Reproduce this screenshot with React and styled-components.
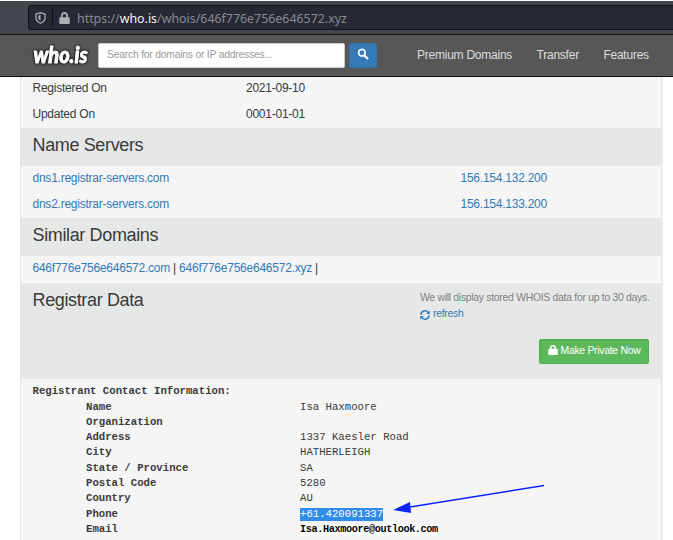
import React from 'react';
import styled, { createGlobalStyle } from 'styled-components';
import { FaLock } from 'react-icons/fa';

const Global = createGlobalStyle`
  * { box-sizing: border-box; }
  html, body { margin: 0; background: #fff; overflow: hidden; }
  body { font-family: "Liberation Sans", Arial, sans-serif; font-size: 12px; letter-spacing: -0.24px; color: #3a3a3a; }
`;

const Page = styled.div`
  width: 673px;
  height: 540px;
  overflow: hidden;
  display: flex;
  flex-direction: column;
`;

const BrowserBar = styled.div`
  height: 34px;
  flex: none;
  background: #42464d;
  border-top: 1px solid #fff;
  padding: 4px 0 0 28px;
`;

const AddressField = styled.div`
  height: 25px;
  display: flex;
  align-items: center;
  background: #262833;
  border: 1px solid #101116;
  border-right: 0;
  border-radius: 4px 0 0 4px;
  font-family: "Noto Sans", sans-serif;
  font-size: 12.4px;
  letter-spacing: 0;
  color: #8b8c92;
`;

const ShieldIcon = styled.svg`
  width: 11px;
  height: 12px;
  margin-left: 6px;
`;

const Divider = styled.span`
  width: 1px;
  height: 19px;
  margin: 0 6px;
  background: #101116;
`;

const PadlockIcon = styled(FaLock)`
  width: 11px;
  height: 12px;
  color: #acadb0;
`;

const Url = styled.span`
  margin-left: 7px;
  padding-top: 1px;
  white-space: pre;
`;

const Host = styled.span`
  color: #f1f1f3;
`;

const Navbar = styled.nav`
  height: 43px;
  flex: none;
  display: flex;
  align-items: center;
  background: #575757;
  border-top: 1px solid #111;
  border-bottom: 1px solid #111;
  padding-left: 32px;
`;

const Logo = styled.svg`
  width: 60px;
  height: 28px;
  flex: none;
  overflow: visible;
  letter-spacing: 0;
  filter: drop-shadow(0 0 1px #111) drop-shadow(0 0 1px #222);
`;

const SearchBox = styled.div`
  width: 247px;
  height: 25px;
  margin-left: 6px;
  padding: 0 8px 2px;
  display: flex;
  align-items: center;
  background: #fff;
  border: 1px solid #ccc;
  border-radius: 2px;
  color: #999;
  font-size: 10.4px;
  letter-spacing: -0.24px;
`;

const SearchButton = styled.button`
  width: 28px;
  height: 25px;
  margin: 0 0 0 4px;
  padding: 0 0 3px;
  display: flex;
  align-items: center;
  justify-content: center;
  color: #fff;
  background: #337ab7;
  border: 1px solid #2e75b0;
  border-radius: 2px;
`;

const NavLinks = styled.div`
  display: flex;
  gap: 24.5px;
  margin-left: 40px;
  padding-bottom: 1px;
  color: #ddd;
`;

const Panel = styled.main`
  width: 643px;
  height: 463px;
  flex: none;
  margin-left: 20px;
  background: #f5f5f5;
  border-left: 1px solid #e3e3e3;
  border-right: 2px solid #e9e9e9;
`;

const Row = styled.div`
  height: ${p => p.$height || 26}px;
  padding: ${p => p.$top || 5}px 0 0 11.5px;
  line-height: 14px;
  display: grid;
  grid-template-columns: ${p => p.$columns || '213.5px 1fr'};
`;

const Heading = styled.div`
  height: ${p => p.$height || 38}px;
  padding: ${p => (p.$light ? 6 : 5)}px 12px 0 11.5px;
  display: flex;
  justify-content: space-between;
  background: #e6e8e7;
  border-top: 1px solid ${p => (p.$light ? '#fff' : '#e3e5e4')};
`;

const Title = styled.h2`
  margin: 0;
  font-size: 18px;
  line-height: 23px;
  letter-spacing: -0.36px;
  font-weight: 400;
`;

const Link = styled.a`
  color: #337ab7;
`;

const Notice = styled.div`
  width: 229px;
  padding-top: 1px;
  font-size: 10.4px;
  letter-spacing: -0.28px;
  line-height: 16.4px;
  color: #808080;
  white-space: nowrap;
`;

const Refresh = styled(Link)`
  display: flex;
  align-items: center;
  gap: 3px;
`;

const PrivateButton = styled.button`
  width: 110px;
  height: 25px;
  margin: 16px 0 0 119px;
  padding: 0 0 2px;
  display: flex;
  align-items: center;
  justify-content: center;
  gap: 3px;
  color: #fff;
  background: #5cb85c;
  border: 1px solid #4cae4c;
  border-radius: 2px;
  font: 10.4px "Liberation Sans", Arial, sans-serif;
  letter-spacing: -0.28px;
`;

const Record = styled.dl`
  margin: 0;
  padding: 5.4px 0 0 11.5px;
  font-family: "Liberation Mono", monospace;
  font-size: 10.67px;
  letter-spacing: 0;
  line-height: 15.28px;
`;

const RecordTitle = styled.div`
  font-weight: 700;
`;

const Field = styled.div`
  height: 15.28px;
  display: grid;
  grid-template-columns: 214px 1fr;
  padding-left: 53.5px;
`;

const Label = styled.dt`
  font-weight: 700;
`;

const Value = styled.dd`
  margin: 0;
`;

const Selected = styled.span`
  display: inline-block;
  height: 13px;
  line-height: 12px;
  color: #fff;
  background: #308ce8;
`;

const Email = styled.span`
  display: inline-block;
  height: 11px;
  line-height: 10px;
  background: #fff;
  color: #000;
  font-size: 10.2px;
  letter-spacing: -0.37px;
  font-weight: 700;
`;

const Arrow = styled.svg`
  position: absolute;
  left: 390px;
  top: 480px;
  width: 158px;
  height: 36px;
`;

const SearchIcon = () => (
  <svg width="12" height="12" viewBox="0 0 12 12" fill="none" stroke="currentColor">
    <circle cx="4.900" cy="4.700" r="3.300" strokeWidth="1.700" />
    <path d="M7.500 7.400 10.500 10.400" strokeWidth="2.100" strokeLinecap="round" />
  </svg>
);

const RefreshIcon = () => (
  <svg width="10" height="10" viewBox="0 0 10 10" fill="none" stroke="currentColor" strokeWidth="1.500">
    <path d="M.9 4.600A4 4 0 0 1 8 2.300M9.100 5.400A4 4 0 0 1 2 7.700" />
    <path d="M9.800 .4v3.600H6.200ZM.2 9.600V6h3.600Z" fill="currentColor" stroke="none" />
  </svg>
);

const LockIcon = () => (
  <svg width="10" height="10" viewBox="0 0 10 10">
    <path d="M2.700 4.500V3a2.300 2.200 0 0 1 4.600 0v1.500" fill="none" stroke="currentColor" strokeWidth="1.500" />
    <rect x=".3" y="3.700" width="9.400" height="6.300" rx=".6" fill="currentColor" />
  </svg>
);

const contact = [
  ['Name', 'Isa Haxmoore'],
  ['Organization', ''],
  ['Address', '1337 Kaesler Road'],
  ['City', 'HATHERLEIGH'],
  ['State / Province', 'SA'],
  ['Postal Code', '5280'],
  ['Country', 'AU'],
  ['Phone', <Selected>+61.420091337</Selected>],
  ['Email', <Email>Isa.Haxmoore@outlook.com</Email>],
];

const servers = [
  ['dns1.registrar-servers.com', '156.154.132.200'],
  ['dns2.registrar-servers.com', '156.154.133.200'],
];

export default function App() {
  return (
    <Page>
      <Global />
      <BrowserBar>
        <AddressField>
          <ShieldIcon viewBox="0 0 10 11">
            <path d="M5 .7 9.2 1.8V5C9.2 7.5 7.4 9.3 5 10.3 2.6 9.3.8 7.5.8 5V1.8Z" fill="none" stroke="#acadb0" strokeWidth="1.2" />
            <path d="M5 2.800v5.400C3.600 7.300 3 6.200 3 4.800V3.300Z" fill="#acadb0" />
          </ShieldIcon>
          <Divider />
          <PadlockIcon />
          <Url>https://<Host>who.is</Host>/whois/646f776e756e646572.xyz</Url>
        </AddressField>
      </BrowserBar>
      <Navbar>
        <Logo viewBox="0 0 60 28">
          <text x="1.500" y="21" fontFamily="Lato" fontStyle="italic" fontWeight="900" fontSize="23.500" textLength="54" lengthAdjust="spacingAndGlyphs" fill="#fff" stroke="#fff" strokeWidth=".9" strokeLinejoin="round">who.is</text>
        </Logo>
        <SearchBox>Search for domains or IP addresses...</SearchBox>
        <SearchButton aria-label="Search"><SearchIcon /></SearchButton>
        <NavLinks>
          <span>Premium Domains</span>
          <span>Transfer</span>
          <span>Features</span>
        </NavLinks>
      </Navbar>
      <Panel>
        <Row $height={25} $top={4}><span>Registered On</span><span>2021-09-10</span></Row>
        <Row><span>Updated On</span><span>0001-01-01</span></Row>
        <Heading><Title>Name Servers</Title></Heading>
        {servers.map(([name, ip]) => (
          <Row key={name} $columns="428px 1fr"><Link>{name}</Link><Link>{ip}</Link></Row>
        ))}
        <Heading><Title>Similar Domains</Title></Heading>
        <Row $columns="1fr">
          <span><Link>646f776e756e646572.com</Link> | <Link>646f776e756e646572.xyz</Link> |</span>
        </Row>
        <Heading $light $height={97}>
          <Title>Registrar Data</Title>
          <Notice>
            We will display stored WHOIS data for up to 30 days.
            <Refresh><RefreshIcon />refresh</Refresh>
            <PrivateButton><LockIcon />Make Private Now</PrivateButton>
          </Notice>
        </Heading>
        <Record>
          <RecordTitle>Registrant Contact Information:</RecordTitle>
          {contact.map(([label, value]) => (
            <Field key={label}><Label>{label}</Label><Value>{value}</Value></Field>
          ))}
        </Record>
      </Panel>
      <Arrow viewBox="0 0 158 36">
        <path d="M154 5.500 20 27" stroke="#0b24fb" strokeWidth="1.5" />
        <path d="M3 30 20 22 21 33Z" fill="#0b24fb" />
      </Arrow>
    </Page>
  );
}
